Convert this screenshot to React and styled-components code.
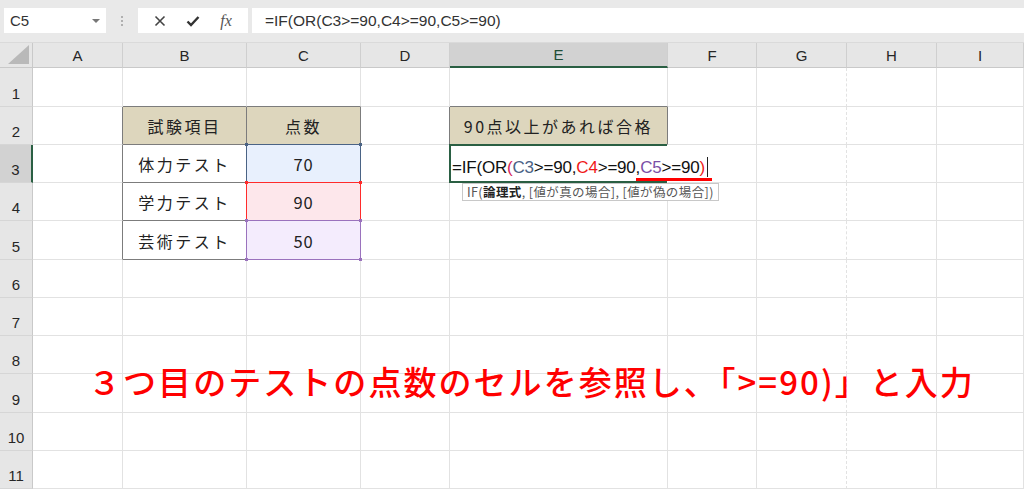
import React from 'react';
import styled, { createGlobalStyle } from 'styled-components';

const GlobalStyle = createGlobalStyle`
  html, body { margin: 0; padding: 0; }
  body {
    width: 1024px;
    height: 489px;
    overflow: hidden;
    background: #ffffff;
    font-family: "Noto Sans CJK JP", sans-serif;
  }
`;

const COLS = ['A', 'B', 'C', 'D', 'E', 'F', 'G', 'H', 'I'];
const COL_WIDTHS = [90, 124, 114, 89, 218, 89, 90, 90, 87];
const ROWS = [1, 2, 3, 4, 5, 6, 7, 8, 9, 10, 11];

const GRID = '#e2e2e2';
const TABLE = '#7c7c7c';
const TAN = '#ddd6bd';
const GREEN = '#2a5f43';

const Page = styled.div`
  display: flex;
  flex-direction: column;
  width: 1024px;
  height: 489px;
  overflow: hidden;
`;

const Toolbar = styled.div`
  display: flex;
  align-items: flex-start;
  height: 44px;
  padding: 8px 0 0 4px;
  box-sizing: border-box;
  background: #e9e9e9;
  border-bottom: 1px solid #dadada;
`;

const NameBox = styled.div`
  display: flex;
  align-items: center;
  justify-content: space-between;
  width: 102px;
  height: 25px;
  padding: 0 6px 0 6px;
  box-sizing: border-box;
  background: #fff;
  font-family: "Liberation Sans", sans-serif;
  font-size: 15px;
  color: #333;
`;

const Caret = styled.span`
  width: 0;
  height: 0;
  border-left: 4px solid transparent;
  border-right: 4px solid transparent;
  border-top: 4px solid #777;
`;

const Grip = styled.div`
  display: flex;
  flex-direction: column;
  justify-content: center;
  gap: 2px;
  width: 32px;
  height: 25px;
  align-items: center;
  span {
    width: 2px;
    height: 2px;
    background: #b0b0b0;
  }
`;

const FxBox = styled.div`
  display: flex;
  align-items: center;
  justify-content: space-around;
  width: 110px;
  height: 25px;
  padding: 0 6px;
  box-sizing: border-box;
  background: #fff;
  margin-right: 4px;
`;

const FxLabel = styled.span`
  font-family: "Liberation Serif", serif;
  font-style: italic;
  font-size: 16px;
  color: #555;
`;

const FormulaInput = styled.div`
  flex: 1;
  display: flex;
  align-items: center;
  height: 25px;
  padding-left: 13px;
  background: #fff;
  font-family: "Liberation Sans", sans-serif;
  font-size: 15.5px;
  color: #333;
`;

const Sheet = styled.div`
  position: relative;
  display: grid;
  grid-template-columns: 33px ${COL_WIDTHS.map((w) => `${w}px`).join(' ')};
  grid-template-rows: 25px repeat(11, 38.25px);
  flex: 1;
  background: #fff;
`;

const Corner = styled.div`
  position: relative;
  background: #e6e6e6;
  border-right: 1px solid #c9c9c9;
  border-bottom: 1px solid #c9c9c9;
  box-sizing: border-box;
  display: flex;
  align-items: flex-end;
  justify-content: flex-end;
  padding: 0 3px 3px 0;
`;

const ColHead = styled.div`
  display: flex;
  align-items: center;
  justify-content: center;
  box-sizing: border-box;
  background: ${(p) => (p.$active ? '#d2d2d2' : '#e6e6e6')};
  border-right: 1px solid #cfcfcf;
  border-bottom: ${(p) => (p.$active ? `2px solid ${GREEN}` : '1px solid #c9c9c9')};
  font-family: "Liberation Sans", sans-serif;
  font-size: 15px;
  color: ${(p) => (p.$active ? '#1f4d36' : '#262626')};
`;

const RowHead = styled.div`
  display: flex;
  align-items: flex-end;
  justify-content: center;
  padding-bottom: 4px;
  box-sizing: border-box;
  background: ${(p) => (p.$active ? '#d2d2d2' : '#e6e6e6')};
  border-right: ${(p) => (p.$active ? `2px solid ${GREEN}` : '1px solid #c9c9c9')};
  border-bottom: 1px solid #d6d6d6;
  font-family: "Liberation Sans", sans-serif;
  font-size: 15px;
  color: #262626;
`;

const Cell = styled.div`
  position: relative;
  display: flex;
  align-items: flex-end;
  justify-content: center;
  padding-bottom: 6px;
  box-sizing: border-box;
  background: ${(p) => p.$bg || '#fff'};
  border-right: 1px solid ${(p) => p.$right || GRID};
  border-bottom: 1px solid ${(p) => p.$bottom || GRID};
  border-right-style: ${(p) => (p.$dashed ? 'dashed' : 'solid')};
  font-size: ${(p) => (p.$num ? '16.5px' : '16px')};
  letter-spacing: ${(p) => (p.$num ? '0.8px' : '2.5px')};
  color: #222;
  white-space: nowrap;
  z-index: ${(p) => (p.$top ? 3 : 'auto')};
`;

const RefBox = styled.div`
  position: absolute;
  top: -1px;
  left: -1px;
  right: -1px;
  bottom: -1px;
  border: 1px solid ${(p) => p.$color};
  pointer-events: none;
  z-index: 2;
  i {
    position: absolute;
    width: 3px;
    height: 3px;
    background: ${(p) => p.$color};
  }
  i:nth-child(1) { top: -2px; left: -2px; }
  i:nth-child(2) { top: -2px; right: -2px; }
  i:nth-child(3) { bottom: -2px; left: -2px; }
  i:nth-child(4) { bottom: -2px; right: -2px; }
`;

const Selection = styled.div`
  position: absolute;
  top: -1px;
  left: -1px;
  right: 0;
  bottom: -1px;
  border: 2px solid ${GREEN};
  border-right: none;
  pointer-events: none;
`;

const EditText = styled.div`
  position: absolute;
  left: 2px;
  bottom: 4px;
  display: flex;
  align-items: flex-end;
  padding-right: 2px;
  background: #fff;
  font-family: "Liberation Sans", sans-serif;
  font-size: 17px;
  letter-spacing: -0.2px;
  color: #111;
  z-index: 3;
`;

const Ref = styled.span`
  color: ${(p) => p.$color};
`;

const Cursor = styled.span`
  display: inline-block;
  width: 1px;
  height: 20px;
  margin-left: 2px;
  margin-bottom: 1px;
  background: #222;
`;

const Underline = styled.div`
  position: absolute;
  left: 186px;
  bottom: 1px;
  width: 76px;
  height: 3px;
  background: #ff0000;
  z-index: 4;
`;

const Tip = styled.div`
  position: absolute;
  top: 38px;
  left: 12px;
  display: flex;
  align-items: center;
  height: 16px;
  padding: 0 4px;
  background: #fff;
  border: 1px solid #c8c8c8;
  font-size: 12.5px;
  letter-spacing: 0.4px;
  color: #555;
  white-space: nowrap;
  z-index: 4;
  b { color: #222; font-weight: 700; }
`;

const Note = styled.div`
  position: absolute;
  left: 88px;
  top: 314px;
  font-size: 33px;
  font-weight: 500;
  letter-spacing: 2.05px;
  color: #ff0000;
  white-space: nowrap;
  pointer-events: none;
  z-index: 5;
`;

const REF_BLUE = '#4a6385';
const REF_RED = '#ff2b2b';
const REF_PURPLE = '#9a72bd';

const CONTENT = {
  B2: { text: '試験項目', bg: TAN },
  C2: { text: '点数', bg: TAN },
  B3: { text: '体力テスト' },
  C3: { text: '70', bg: '#e8f0fd', ref: REF_BLUE, num: true },
  B4: { text: '学力テスト' },
  C4: { text: '90', bg: '#fde7eb', ref: REF_RED, num: true },
  B5: { text: '芸術テスト' },
  C5: { text: '50', bg: '#f4ecfd', ref: REF_PURPLE, num: true },
  E2: { text: '90点以上があれば合格', bg: TAN },
};

const inTable = (c, r) => (c === 'B' || c === 'C') && r >= 2 && r <= 5;

const borderFor = (c, r) => {
  let right;
  let bottom;
  if (inTable(c, r) || (c === 'A' && r >= 2 && r <= 5)) right = TABLE;
  if (inTable(c, r) || ((c === 'B' || c === 'C') && r === 1)) bottom = TABLE;
  if (c === 'E' && r === 2) right = TABLE;
  if (c === 'D' && r === 2) right = TABLE;
  if (c === 'E' && r === 1) bottom = TABLE;
  if (c === 'E' && r === 3) right = '#fff';
  return { right, bottom };
};

const XIcon = () => (
  <svg width="12" height="12" viewBox="0 0 12 12">
    <path d="M1.5 1.5 L10.5 10.5 M10.5 1.5 L1.5 10.5" stroke="#444" strokeWidth="1.6" fill="none" />
  </svg>
);

const CheckIcon = () => (
  <svg width="14" height="12" viewBox="0 0 14 12">
    <path d="M1.5 6.5 L5 10 L12.5 2" stroke="#333" strokeWidth="2.4" fill="none" />
  </svg>
);

const CornerTriangle = () => (
  <svg width="21" height="19" viewBox="0 0 21 19">
    <polygon points="21,0 21,19 0,19" fill="#b9b9b9" />
  </svg>
);

const Formula = ({ big }) => (
  <>
    =IF(OR<Ref $color={big ? '#d6245a' : 'inherit'}>(</Ref>
    <Ref $color={big ? REF_BLUE : 'inherit'}>C3</Ref>&gt;=90,
    <Ref $color={big ? '#f01818' : 'inherit'}>C4</Ref>&gt;=90,
    <Ref $color={big ? '#7a4fa6' : 'inherit'}>C5</Ref>&gt;=90
    <Ref $color={big ? '#f01818' : 'inherit'}>)</Ref>
  </>
);

const SheetCell = ({ c, r }) => {
  const data = CONTENT[`${c}${r}`] || {};
  const { right, bottom } = borderFor(c, r);
  const editing = c === 'E' && r === 3;
  return (
    <Cell
      $bg={data.bg}
      $right={right}
      $bottom={bottom}
      $dashed={c === 'G' && !right}
      $num={data.num}
      $top={editing}
    >
      {data.text}
      {data.ref && (
        <RefBox $color={data.ref}>
          <i />
          <i />
          <i />
          <i />
        </RefBox>
      )}
      {editing && (
        <>
          <Selection />
          <EditText>
            <Formula big />
            <Cursor />
          </EditText>
          <Underline />
          <Tip>
            IF(<b>論理式</b>, [値が真の場合], [値が偽の場合])
          </Tip>
        </>
      )}
    </Cell>
  );
};

const App = () => (
  <Page>
    <GlobalStyle />
    <Toolbar>
      <NameBox>
        C5
        <Caret />
      </NameBox>
      <Grip>
        <span />
        <span />
        <span />
      </Grip>
      <FxBox>
        <XIcon />
        <CheckIcon />
        <FxLabel>fx</FxLabel>
      </FxBox>
      <FormulaInput>
        <Formula />
      </FormulaInput>
    </Toolbar>
    <Sheet>
      <Corner>
        <CornerTriangle />
      </Corner>
      {COLS.map((c) => (
        <ColHead key={c} $active={c === 'E'}>
          {c}
        </ColHead>
      ))}
      {ROWS.map((r) => (
        <React.Fragment key={r}>
          <RowHead $active={r === 3}>{r}</RowHead>
          {COLS.map((c) => (
            <SheetCell key={c} c={c} r={r} />
          ))}
        </React.Fragment>
      ))}
      <Note>３つ目のテストの点数のセルを参照し、「&gt;=90)」と入力</Note>
    </Sheet>
  </Page>
);

export default App;
